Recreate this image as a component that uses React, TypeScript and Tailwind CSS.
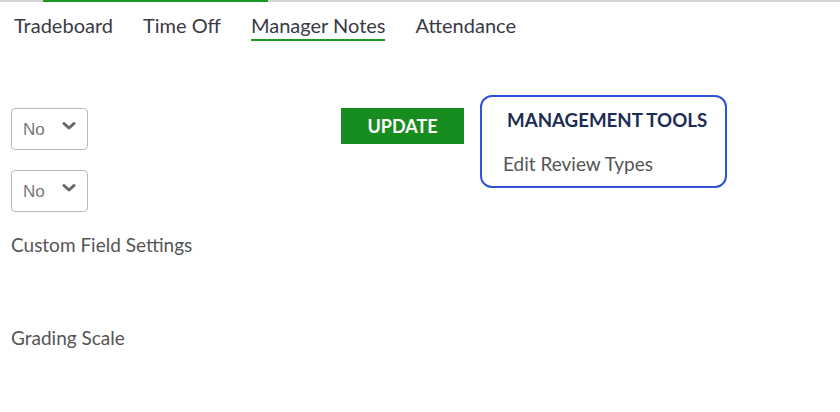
import React from "react";

function Select() {
  return (
    <div className="flex h-[42px] w-[77px] items-center justify-between rounded-[4px] border border-[#b9b9b9] bg-white pl-[11px] pr-[11px]">
      <span className="text-[17px] text-[#777] leading-none" style={{ fontFamily: "Arial, 'Liberation Sans', sans-serif" }}>No</span>
      <svg width="14" height="10" viewBox="0 0 14 10" className="-mt-[6px]">
        <path d="M2 2.5 L7 7 L12 2.5" fill="none" stroke="#666" strokeWidth="3" strokeLinecap="round" strokeLinejoin="round" />
      </svg>
    </div>
  );
}

export default function App() {
  return (
    <div className="relative h-[412px] w-[840px] overflow-hidden bg-white text-[#333]" style={{ fontFamily: "Lato, 'Open Sans', sans-serif" }}>
      <div className="h-[2px] w-full bg-[#d6d6d6]">
        <div className="ml-[43px] h-[2px] w-[225px] bg-[#1a9a22]" />
      </div>
      <div className="flex items-start gap-[30px] pl-[14px] pt-[10px] text-[20px] leading-[26px] text-[#3a3a44]">
        <div className="pb-[3px]">Tradeboard</div>
        <div className="pb-[3px]">Time Off</div>
        <div className="border-b-2 border-[#1a9a22] pb-[1px]">Manager Notes</div>
        <div className="pb-[3px]">Attendance</div>
      </div>
      <div className="mt-[67px] flex pl-[11px]">
        <div className="flex flex-col">
          <div className="flex">
            <Select />
            <div className="ml-[253px] flex h-[36px] w-[123px] items-center justify-center bg-[#178c1f] text-[18px] font-bold text-white">UPDATE</div>
            <div className="ml-[16px] -mt-[13px] flex h-[93px] w-[247px] flex-col rounded-[12px] border-2 border-[#2f52d6] pl-[21px]">
              <div className="mt-[9px] pl-[4px] text-[18.7px] font-bold text-[#1d2c55]">MANAGEMENT TOOLS</div>
              <div className="mt-[18px] text-[19px] leading-[24px] text-[#555]">Edit Review Types</div>
            </div>
          </div>
          <div className="-mt-[18px]">
            <Select />
          </div>
          <div className="mt-[19px] text-[19px] text-[#555]">Custom Field Settings</div>
          <div className="mt-[64px] text-[19px] text-[#555]">Grading Scale</div>
        </div>
      </div>
    </div>
  );
}
